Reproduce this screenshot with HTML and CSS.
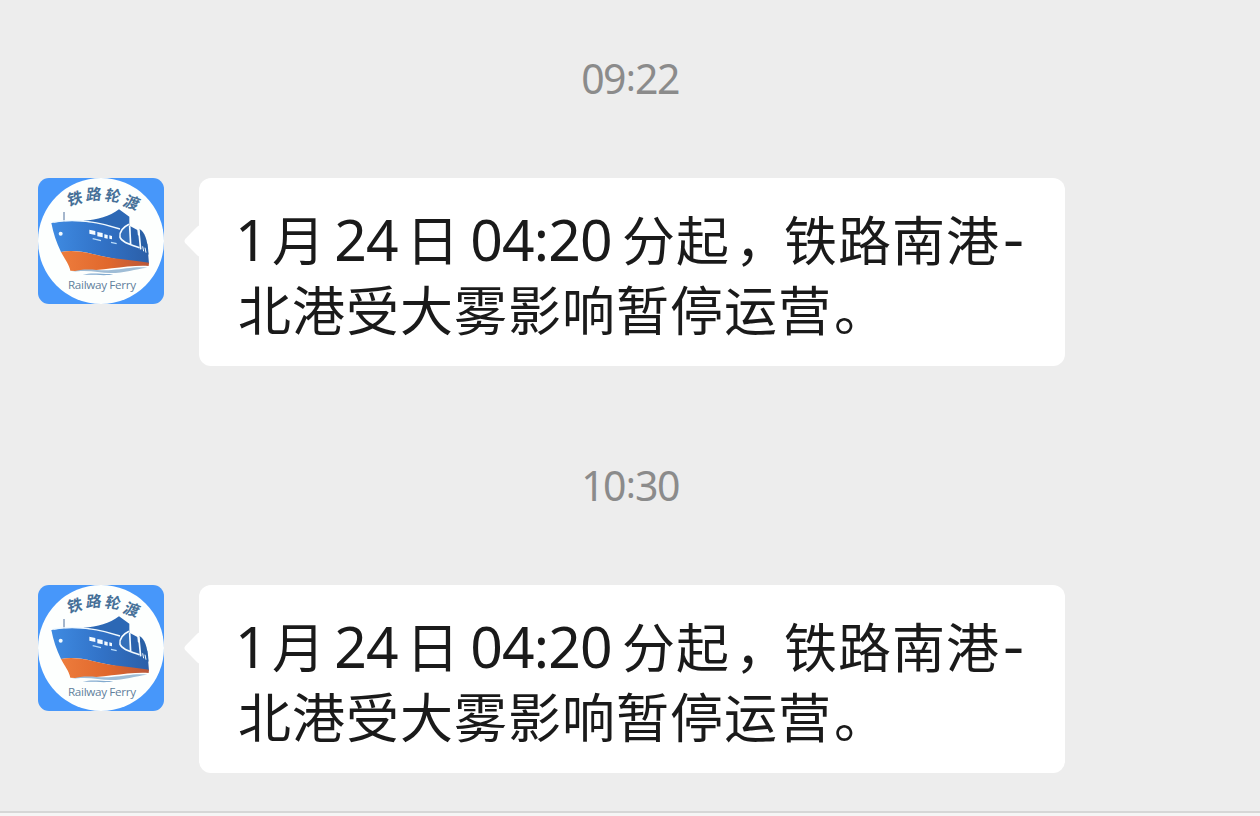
FILE: index.html
```
<!DOCTYPE html>
<html lang="zh-CN">
<head>
    <meta charset="UTF-8">
    <title>铁路轮渡</title>
    <link rel="stylesheet" href="styles.css">
</head>
<body>
    <main class="chat">
        <time class="stamp">09<span class="colon">:</span>22</time>
        <div class="message">
            <svg class="avatar" viewBox="24 24 378 378">
                <defs>
                    <linearGradient id="hull" x1="0" y1="0" x2="1" y2="0">
                        <stop offset="0" stop-color="#3f8be2"/>
                        <stop offset=".5" stop-color="#3273c8"/>
                        <stop offset="1" stop-color="#2b5fa8"/>
                    </linearGradient>
                    <linearGradient id="keel" x1="0" y1="0" x2="1" y2="0">
                        <stop offset="0" stop-color="#ed7c3c"/>
                        <stop offset=".55" stop-color="#e0672c"/>
                        <stop offset="1" stop-color="#b9573a"/>
                    </linearGradient>
                </defs>
                <g id="ferry">
                    <rect x="24" y="24" width="378" height="378" fill="#4797fa"/>
                    <circle cx="213" cy="213" r="189" fill="#fdfffe"/>
                    <g class="brand">
                        <text transform="translate(114 108) rotate(-14) skewX(-8)">铁</text>
                        <text transform="translate(167 91) rotate(-3) skewX(-8)">路</text>
                        <text transform="translate(222 91) rotate(7) skewX(-8)">轮</text>
                        <text transform="translate(276 106) rotate(18) skewX(-8)">渡</text>
                    </g>
                    <path d="M102 126V160" fill="none" stroke="#4d6f9b" stroke-width="3"/>
                    <!-- upper deck -->
                    <path d="M160 152C204 150 238 139 267 118L298 140 298 180 262 180Z" fill="#2c68b5"/>
                    <!-- hull -->
                    <path d="M64 159C105 150 153 151 199 160L264 175 337 200 352 222 357 281C309 276 252 268 190 253 153 243 122 241 93 246 79 217 70 190 64 159Z" fill="url(#hull)"/>
                    <path d="M71 156C125 148 175 152 224 164L270 177" fill="none" stroke="#eef8ff" stroke-width="4"/>
                    <path d="M93 246C132 238 173 248 214 258 263 268 318 272 357 278L356 288C280 284 206 308 121 302 117 282 105 269 93 246Z" fill="url(#keel)"/>
                    <!-- bridge windows -->
                    <path d="M292 166C276 174 268 186 270 202 274 214 288 220 302 226L299 168Z" fill="#3470ba"/>
                    <path d="M300 168L322 180 328 234 302 226Z" fill="#2b63ad"/>
                    <path d="M328 176C344 186 352 206 356 254L334 240Z" fill="#2960a6"/>
                    <path d="M297 163C278 172 268 186 270 202 275 216 296 222 328 233M299 168L302 225M326 178L332 238" fill="none" stroke="#f4fbff" stroke-width="5"/>
                    <path d="M338 229L341 244M345 233L348 248" fill="none" stroke="#f4fbff" stroke-width="3"/>
                    <circle cx="92" cy="191" r="6" fill="#f2fbff"/>
                    <path d="M178 179L196 183V195L178 191ZM202 186L218 189V202L202 199ZM223 193L233 195V206L223 204ZM238 196L246 198V208L238 206Z" fill="#f4fbff"/>
                    <path d="M188 206L213 212M243 217L260 221" fill="none" stroke="#b9dcfa" stroke-width="4"/>
                    <path d="M125 306C171 291 204 304 244 300 286 297 313 289 352 293 315 297 284 309 242 309 207 309 174 298 125 306Z" fill="#9fbdd6"/>
                    <path d="M158 315C188 305 216 314 250 312 234 319 194 313 158 315Z" fill="#83abcf"/>
                    <text class="brand-en" x="114" y="358" textLength="204">Railway Ferry</text>
                </g>
            </svg>
            <div class="bubble">
                <p><span class="num day">1</span>月<span class="num date">24</span>日<span class="num clock">04:20</span>分起<span class="comma">，</span>铁路南港<span class="num dash">-</span></p>
                <p>北港受大雾影响暂停运营<span class="stop">。</span></p>
            </div>
        </div>

        <time class="stamp">10<span class="colon">:</span>30</time>
        <div class="message">
            <svg class="avatar" viewBox="24 24 378 378"><use href="#ferry"/></svg>
            <div class="bubble">
                <p><span class="num day">1</span>月<span class="num date">24</span>日<span class="num clock">04:20</span>分起<span class="comma">，</span>铁路南港<span class="num dash">-</span></p>
                <p>北港受大雾影响暂停运营<span class="stop">。</span></p>
            </div>
        </div>
    </main>
    <footer class="toolbar"></footer>
</body>
</html>
```
FILE: styles.css
```
* { box-sizing: border-box; }
body { margin: 0; height: 816px; overflow: hidden; display: flex; flex-direction: column; background: #ededed; font-family: "Noto Sans", "Noto Sans CJK SC", sans-serif; }
.chat { height: 811px; padding-top: 48px; overflow: hidden; }

.stamp { display: block; height: 60px; line-height: 60px; text-align: center; font-size: 41px; letter-spacing: -1.6px; color: #8b8b8b; }
.colon { font-size: 36px; line-height: 1; vertical-align: 3px; padding: 0 1px; }

.message { display: flex; align-items: flex-start; gap: 35px; height: 277px; padding: 0 38px; margin-top: 70px; }
.avatar { display: block; flex: none; width: 126px; height: 126px; border-radius: 11px; }

.bubble { position: relative; width: 866px; height: 188px; padding: 25px 0 0 39px; border-radius: 12px; background: #fff; color: #1a1a1a; }
.bubble::before { content: ""; position: absolute; left: -11px; top: 51px; width: 24px; height: 24px; border-radius: 4px; background: #fff; transform: rotate(45deg); }
.bubble p { margin: 0; height: 70px; line-height: 70px; white-space: nowrap; font-family: "Noto Sans CJK SC", sans-serif; font-size: 53px; letter-spacing: 1px; }
.num { display: inline-block; height: 70px; line-height: 73px; vertical-align: top; text-align: center; font-family: "Noto Sans", sans-serif; font-size: 57px; letter-spacing: -0.8px; }
.day { width: 34px; text-align: left; text-indent: -3px; }
.date { width: 80px; }
.clock { width: 162px; }
.dash { width: 26px; line-height: 68px; transform: scaleX(1.15); }
.comma, .stop { display: inline-block; width: 54px; height: 70px; vertical-align: top; text-indent: 5px; }
.stop { text-indent: 2px; }

.brand { font-family: "Noto Sans CJK SC", sans-serif; font-size: 46px; font-weight: 700; fill: #467098; }
.brand-en { font-family: "Open Sans", sans-serif; font-size: 35px; fill: #617f9c; }

.toolbar { flex: 1; border-top: 2px solid #d6d6d6; background: #f5f5f5; }
```
